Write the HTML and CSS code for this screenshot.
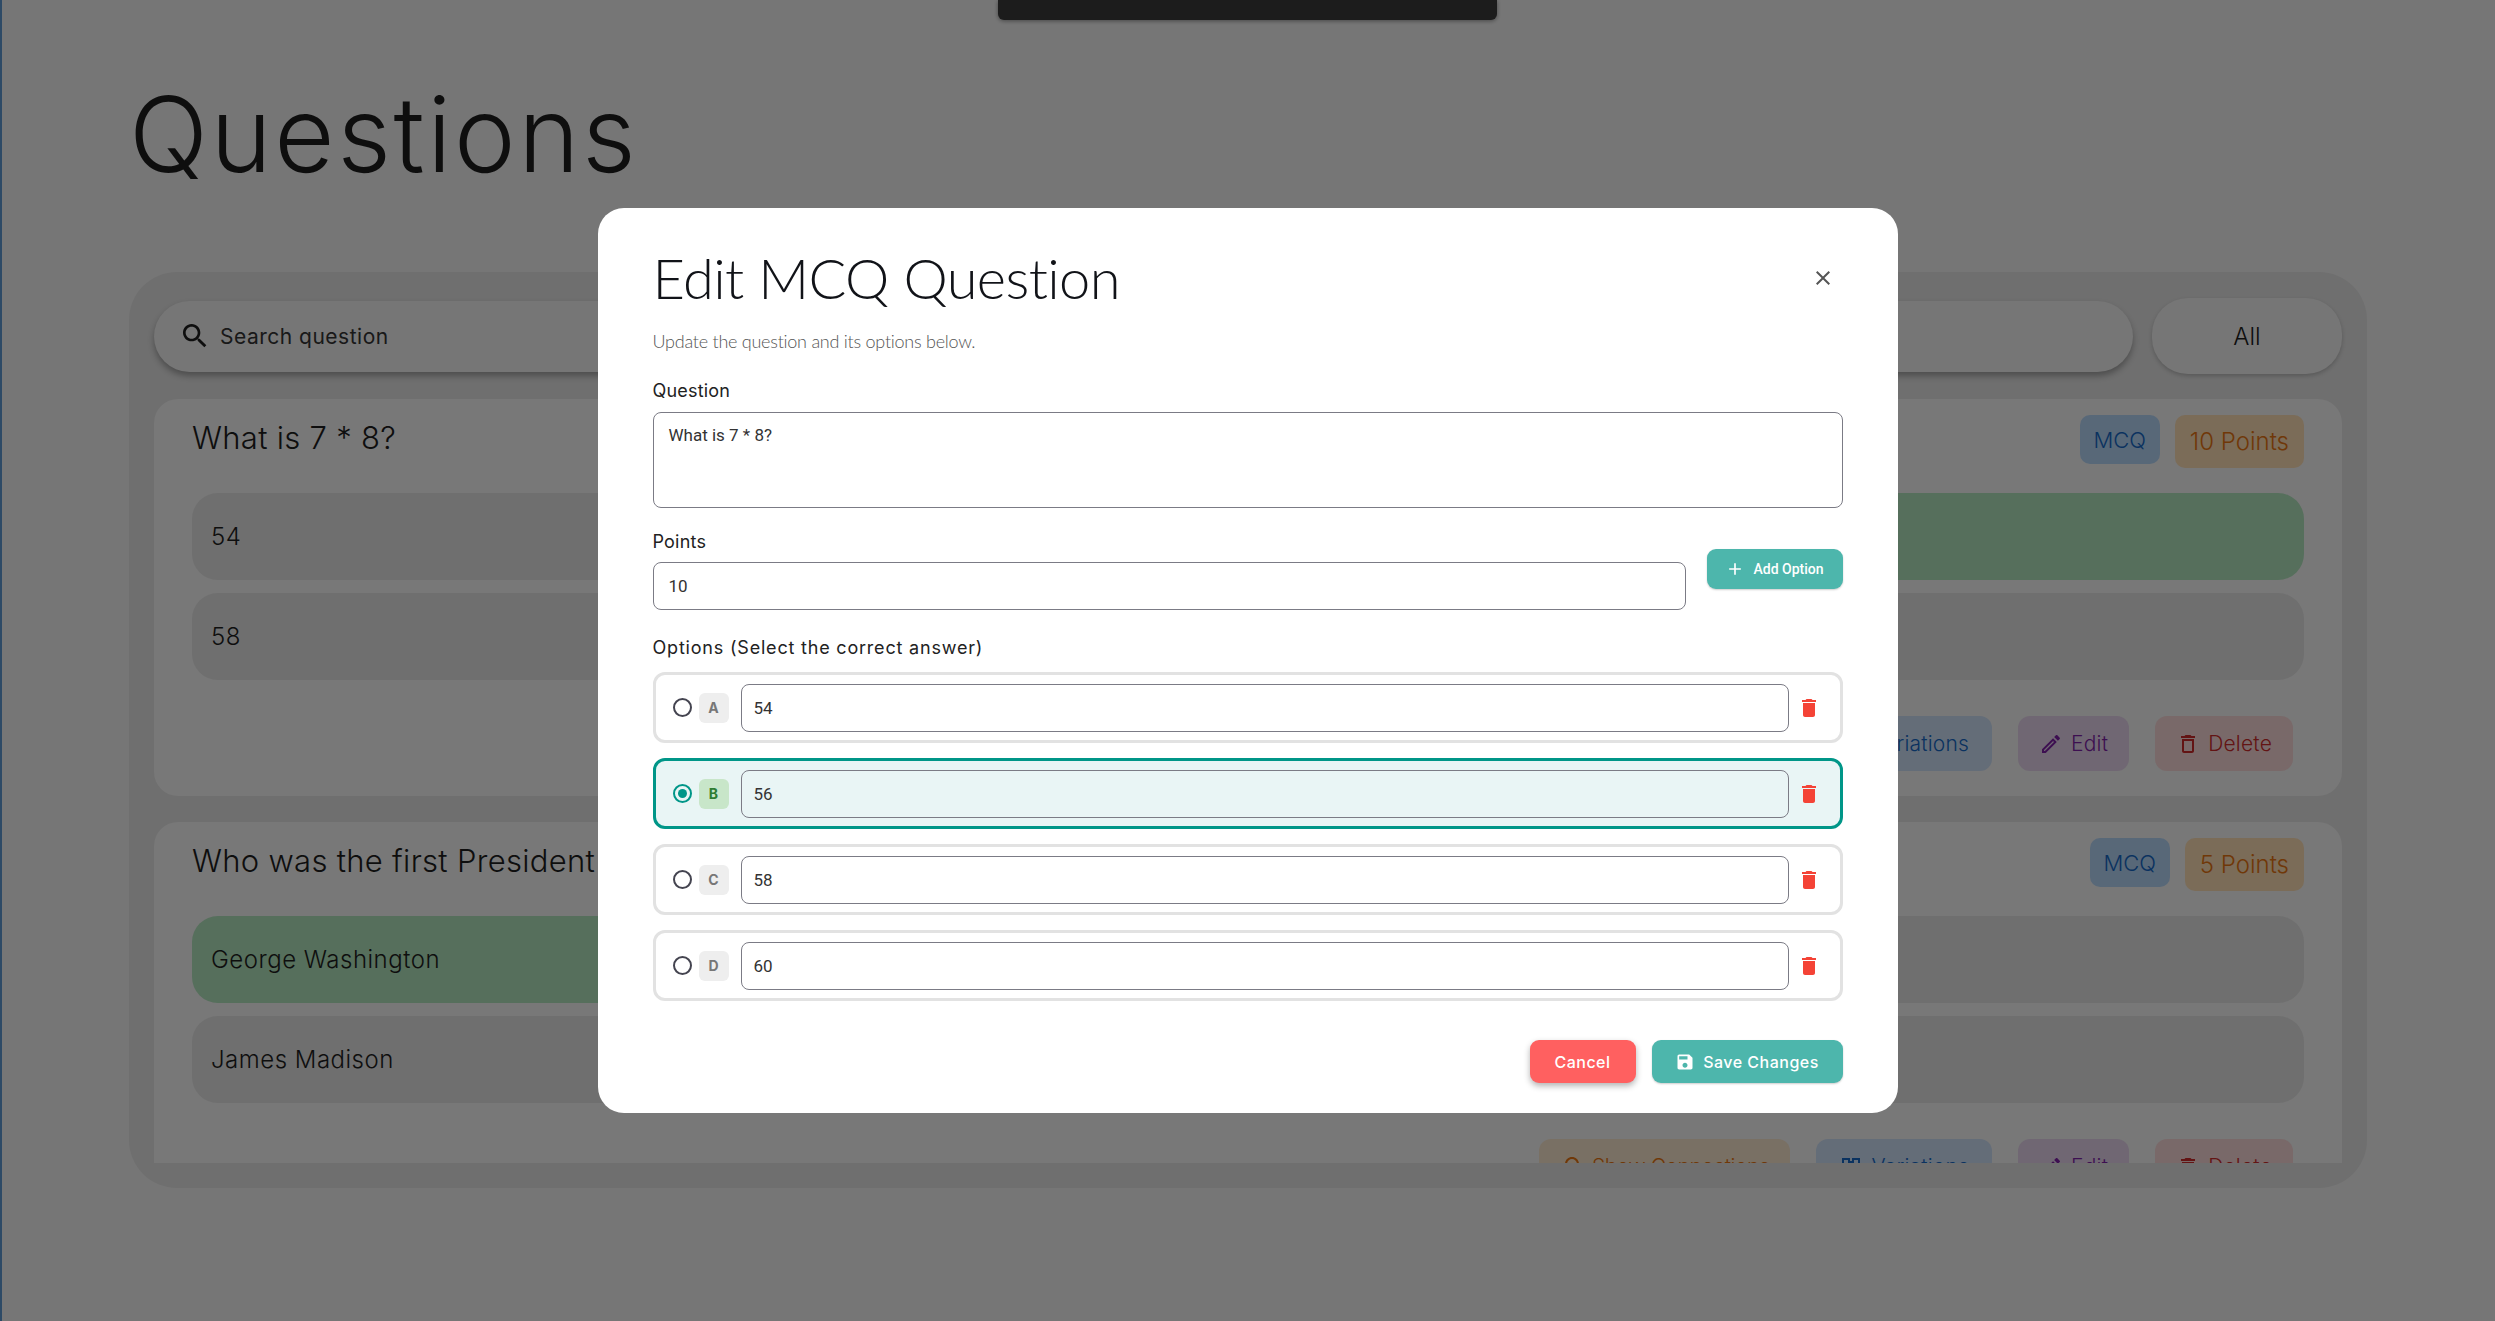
FILE: index.html
```html
<!doctype html>
<html>
    <head>
        <link rel="stylesheet" href="styles.css">
    </head>
    <body>
        <div class="page">
            <h1 class="page-title">Questions</h1>

            <div class="panel">
                <div class="toolbar">
                    <div class="search">
                        <svg class="icon search-icon" viewBox="0 0 24 24"><path d="M15.5 14h-.79l-.28-.27C15.41 12.59 16 11.11 16 9.5 16 5.91 13.09 3 9.5 3S3 5.91 3 9.5 5.91 16 9.5 16c1.61 0 3.09-.59 4.23-1.57l.27.28v.79l5 4.99L20.49 19l-4.99-5zm-6 0C7.01 14 5 11.99 5 9.5S7.01 5 9.5 5 14 7.01 14 9.5 11.99 14 9.5 14z"/></svg>
                        <span>Search question</span>
                    </div>
                    <div class="filter">All</div>
                </div>

                <div class="list">
                    <div class="card card-first">
                        <div class="card-head">
                            <h2 class="card-title">What is 7 * 8?</h2>
                            <div class="tags">
                                <span class="tag tag-type">MCQ</span>
                                <span class="tag tag-points">10 Points</span>
                            </div>
                        </div>
                        <div class="answers">
                            <div class="answer">54</div>
                            <div class="answer answer-right">56</div>
                            <div class="answer">58</div>
                            <div class="answer">60</div>
                        </div>
                        <div class="actions">
                            <span class="action action-orange">
                                <svg class="icon" viewBox="0 0 24 24"><path d="M9 21c0 .55.45 1 1 1h4c.55 0 1-.45 1-1v-1H9v1zm3-19C8.14 2 5 5.14 5 9c0 2.38 1.19 4.47 3 5.74V17c0 .55.45 1 1 1h6c.55 0 1-.45 1-1v-2.26c1.81-1.27 3-3.36 3-5.74 0-3.86-3.14-7-7-7zm2 11.7V16h-4v-2.3C8.48 12.63 7 11.53 7 9c0-2.76 2.24-5 5-5s5 2.24 5 5c0 2.49-1.51 3.65-3 4.7z"/></svg>
                                Show Connections
                            </span>
                            <span class="action action-blue">
                                <svg class="icon" viewBox="0 0 24 24"><path fill-rule="evenodd" d="M3 3h8v8H3zM5 5v4h4V5zM13 3h8v8h-8zM15 5v4h4V5zM11 6h2v2h-2zM6 11h2v4h4v-2h6v8h-6v-4H6z"/></svg>
                                Variations
                            </span>
                            <span class="action action-purple">
                                <svg class="icon" viewBox="0 0 24 24"><path d="M14.06 9.02l.92.92L5.92 19H5v-.92l9.06-9.06M17.66 3c-.25 0-.51.1-.7.29l-1.83 1.83 3.75 3.75 1.83-1.83c.39-.39.39-1.02 0-1.41l-2.34-2.34c-.2-.2-.45-.29-.71-.29zm-3.6 3.19L3 17.25V21h3.75L17.81 9.94l-3.75-3.75z"/></svg>
                                Edit
                            </span>
                            <span class="action action-red">
                                <svg class="icon" viewBox="0 0 24 24"><path d="M6 19c0 1.1.9 2 2 2h8c1.1 0 2-.9 2-2V7H6v12zM8 9h8v10H8V9zm7.5-5-1-1h-5l-1 1H5v2h14V4h-3.5z"/></svg>
                                Delete
                            </span>
                        </div>
                    </div>

                    <div class="card">
                        <div class="card-head">
                            <h2 class="card-title">Who was the first President of the USA?</h2>
                            <div class="tags">
                                <span class="tag tag-type">MCQ</span>
                                <span class="tag tag-points">5 Points</span>
                            </div>
                        </div>
                        <div class="answers">
                            <div class="answer answer-right">George Washington</div>
                            <div class="answer">Thomas Jefferson</div>
                            <div class="answer">James Madison</div>
                            <div class="answer">John Adams</div>
                        </div>
                        <div class="actions">
                            <span class="action action-orange">
                                <svg class="icon" viewBox="0 0 24 24"><path d="M9 21c0 .55.45 1 1 1h4c.55 0 1-.45 1-1v-1H9v1zm3-19C8.14 2 5 5.14 5 9c0 2.38 1.19 4.47 3 5.74V17c0 .55.45 1 1 1h6c.55 0 1-.45 1-1v-2.26c1.81-1.27 3-3.36 3-5.74 0-3.86-3.14-7-7-7zm2 11.7V16h-4v-2.3C8.48 12.63 7 11.53 7 9c0-2.76 2.24-5 5-5s5 2.24 5 5c0 2.49-1.51 3.65-3 4.7z"/></svg>
                                Show Connections
                            </span>
                            <span class="action action-blue">
                                <svg class="icon" viewBox="0 0 24 24"><path fill-rule="evenodd" d="M3 3h8v8H3zM5 5v4h4V5zM13 3h8v8h-8zM15 5v4h4V5zM11 6h2v2h-2zM6 11h2v4h4v-2h6v8h-6v-4H6z"/></svg>
                                Variations
                            </span>
                            <span class="action action-purple">
                                <svg class="icon" viewBox="0 0 24 24"><path d="M14.06 9.02l.92.92L5.92 19H5v-.92l9.06-9.06M17.66 3c-.25 0-.51.1-.7.29l-1.83 1.83 3.75 3.75 1.83-1.83c.39-.39.39-1.02 0-1.41l-2.34-2.34c-.2-.2-.45-.29-.71-.29zm-3.6 3.19L3 17.25V21h3.75L17.81 9.94l-3.75-3.75z"/></svg>
                                Edit
                            </span>
                            <span class="action action-red">
                                <svg class="icon" viewBox="0 0 24 24"><path d="M6 19c0 1.1.9 2 2 2h8c1.1 0 2-.9 2-2V7H6v12zM8 9h8v10H8V9zm7.5-5-1-1h-5l-1 1H5v2h14V4h-3.5z"/></svg>
                                Delete
                            </span>
                        </div>
                    </div>
                </div>
            </div>
        </div>

        <div class="overlay">
            <div class="top-bar"></div>
            <div class="modal">
                <div class="modal-head">
                    <h2 class="modal-title">Edit MCQ Question</h2>
                    <svg class="icon close-icon" viewBox="0 0 24 24"><path d="M19 6.41 17.59 5 12 10.59 6.41 5 5 6.41 10.59 12 5 17.59 6.41 19 12 13.41 17.59 19 19 17.59 13.41 12z"/></svg>
                </div>
                <p class="modal-sub">Update the question and its options below.</p>

                <div class="field-label">Question</div>
                <div class="input textarea">What is 7 * 8?</div>

                <div class="points-row">
                    <div class="points-field">
                        <div class="field-label">Points</div>
                        <div class="input">10</div>
                    </div>
                    <div class="btn btn-teal btn-add">
                        <svg class="icon" viewBox="0 0 24 24"><path d="M19 13h-6v6h-2v-6H5v-2h6V5h2v6h6v2z"/></svg>
                        Add Option
                    </div>
                </div>

                <div class="field-label options-label">Options (Select the correct answer)</div>
                <div class="options">
                    <div class="option">
                        <span class="radio"></span>
                        <span class="letter">A</span>
                        <div class="input">54</div>
                        <svg class="icon trash" viewBox="0 0 24 24"><path d="M6 19c0 1.1.9 2 2 2h8c1.1 0 2-.9 2-2V7H6v12zM19 4h-3.5l-1-1h-5l-1 1H5v2h14V4z"/></svg>
                    </div>
                    <div class="option option-selected">
                        <span class="radio"></span>
                        <span class="letter">B</span>
                        <div class="input">56</div>
                        <svg class="icon trash" viewBox="0 0 24 24"><path d="M6 19c0 1.1.9 2 2 2h8c1.1 0 2-.9 2-2V7H6v12zM19 4h-3.5l-1-1h-5l-1 1H5v2h14V4z"/></svg>
                    </div>
                    <div class="option">
                        <span class="radio"></span>
                        <span class="letter">C</span>
                        <div class="input">58</div>
                        <svg class="icon trash" viewBox="0 0 24 24"><path d="M6 19c0 1.1.9 2 2 2h8c1.1 0 2-.9 2-2V7H6v12zM19 4h-3.5l-1-1h-5l-1 1H5v2h14V4z"/></svg>
                    </div>
                    <div class="option">
                        <span class="radio"></span>
                        <span class="letter">D</span>
                        <div class="input">60</div>
                        <svg class="icon trash" viewBox="0 0 24 24"><path d="M6 19c0 1.1.9 2 2 2h8c1.1 0 2-.9 2-2V7H6v12zM19 4h-3.5l-1-1h-5l-1 1H5v2h14V4z"/></svg>
                    </div>
                </div>

                <div class="modal-foot">
                    <div class="btn btn-red">Cancel</div>
                    <div class="btn btn-teal btn-save">
                        <svg class="icon" viewBox="0 0 24 24"><path d="M17 3H5c-1.11 0-2 .9-2 2v14c0 1.1.89 2 2 2h14c1.1 0 2-.9 2-2V7l-4-4zm-5 16c-1.66 0-3-1.34-3-3s1.34-3 3-3 3 1.34 3 3-1.34 3-3 3zm3-10H5V5h10v4z"/></svg>
                        Save Changes
                    </div>
                </div>
            </div>
        </div>
    </body>
</html>
```

FILE: styles.css
```css
html,
body {
    margin: 0;
    padding: 0;
    height: 100%;
    overflow: hidden;
}
body {
    background: #ececec;
    font-family: "Inter", "Liberation Sans", sans-serif;
    color: #1c1c1c;
}
.icon {
    display: block;
    flex: none;
    fill: currentColor;
}

/* page under the dialog */
.page {
    box-sizing: border-box;
    height: 1321px;
    padding: 0 128px 0 127px;
    border-left: 2px solid #5a94cc;
}
.page-title {
    margin: 0;
    padding-top: 74px;
    height: 272px;
    box-sizing: border-box;
    font-size: 104px;
    line-height: 120px;
    font-weight: 300;
    letter-spacing: 2.6px;
    color: #1c1c1c;
}
.panel {
    height: 916px;
    box-sizing: border-box;
    padding: 26px 25px 25px;
    background: #dedede;
    border-radius: 48px;
    display: flex;
    flex-direction: column;
}
.toolbar {
    display: flex;
    align-items: center;
    gap: 19px;
    height: 76px;
    flex: none;
}
.search {
    flex: 1;
    height: 71px;
    border-radius: 36px;
    background: #ececec;
    box-shadow: 0 4px 6px rgba(0, 0, 0, 0.3);
    display: flex;
    align-items: center;
    padding-left: 25px;
    gap: 9px;
    font-size: 21px;
    letter-spacing: 0.5px;
    font-weight: 400;
    color: #333;
}
.search-icon {
    width: 32px;
    height: 32px;
    color: #1c1c1c;
}
.filter {
    width: 190px;
    height: 76px;
    border-radius: 36px;
    background: #ececec;
    box-shadow: 0 2px 4px rgba(0, 0, 0, 0.2);
    display: flex;
    align-items: center;
    justify-content: center;
    font-size: 24px;
    font-weight: 300;
}
.list {
    flex: 1;
    overflow: hidden;
    margin-top: 25px;
    display: flex;
    flex-direction: column;
    gap: 26px;
}
.card {
    flex: none;
    box-sizing: border-box;
    background: #f0f0f0;
    border-radius: 24px;
    padding: 16px 38px 25px;
}
.card-first {
    height: 397px;
}
.card-head {
    display: flex;
    justify-content: space-between;
    align-items: flex-start;
    height: 78px;
}
.card-title {
    margin: 0;
    padding-top: 3px;
    font-size: 31px;
    line-height: 40px;
    font-weight: 300;
    letter-spacing: 0.3px;
    color: #1c1c1c;
}
.tags {
    display: flex;
    align-items: flex-start;
    gap: 15px;
}
.tag {
    display: flex;
    align-items: center;
    justify-content: center;
    border-radius: 10px;
    font-size: 24px;
    font-weight: 300;
}
.tag-type {
    width: 80px;
    height: 49px;
    background: #b0d0f0;
    color: #1565c0;
    font-size: 22px;
}
.tag-points {
    padding: 0 15px;
    height: 53px;
    background: #f6d8b0;
    color: #e07010;
}
.answers {
    display: grid;
    grid-template-columns: 1fr 1fr;
    gap: 13px 16px;
}
.answer {
    height: 87px;
    box-sizing: border-box;
    padding-left: 19px;
    display: flex;
    align-items: center;
    background: #dedede;
    border-radius: 26px;
    font-size: 24px;
    font-weight: 300;
    letter-spacing: 0.5px;
    color: #1c1c1c;
}
.answer-right {
    background: #acdeb8;
}
.actions {
    display: flex;
    justify-content: flex-end;
    gap: 26px;
    margin-top: 36px;
    padding-right: 11px;
}
.action {
    display: flex;
    align-items: center;
    gap: 8px;
    height: 55px;
    padding: 0 21px;
    border-radius: 12px;
    font-size: 21px;
    font-weight: 300;
    letter-spacing: 0.2px;
}
.action .icon {
    width: 24px;
    height: 24px;
}
.action-orange {
    background: #f2e0c8;
    color: #e07010;
    letter-spacing: -0.4px;
}
.action-blue {
    background: #c8daf0;
    color: #1565c0;
    padding: 0 23px;
}
.action-purple {
    background: #e0cfe6;
    color: #7b1fa2;
}
.action-red {
    background: #f2d2d2;
    color: #c62828;
}

/* dialog */
.overlay {
    position: fixed;
    left: 0;
    top: 0;
    right: 0;
    bottom: 0;
    background: rgba(0, 0, 0, 0.5);
    display: flex;
    justify-content: center;
    padding-top: 208px;
    box-sizing: border-box;
}
.top-bar {
    position: absolute;
    left: 998px;
    top: 0;
    width: 499px;
    height: 20px;
    background: #1c1c1c;
    border-radius: 0 0 6px 6px;
    box-shadow: 0 1px 4px rgba(0, 0, 0, 0.4);
}
.modal {
    box-sizing: border-box;
    width: 1300px;
    height: 905px;
    background: #fff;
    border-radius: 26px;
    padding: 38px 55px 0;
}
.modal-head {
    display: flex;
    justify-content: space-between;
    align-items: center;
    height: 64px;
}
.modal-title {
    margin: 0;
    font-family: "Lato", sans-serif;
    font-size: 56px;
    font-weight: 300;
    line-height: 64px;
    letter-spacing: -0.6px;
    color: #111318;
}
.close-icon {
    width: 24px;
    height: 24px;
    color: #555;
    margin-right: 8px;
}
.modal-sub {
    margin: 19px 0 0;
    height: 24px;
    font-family: "Lato", sans-serif;
    font-size: 18px;
    line-height: 24px;
    font-weight: 300;
    letter-spacing: -0.25px;
    color: #555;
}
.field-label {
    font-size: 18px;
    line-height: 24px;
    font-weight: 400;
    letter-spacing: 0.2px;
    color: #222;
    margin-top: 26px;
    margin-bottom: 9px;
}
.input {
    flex: 1;
    box-sizing: border-box;
    height: 48px;
    padding: 0 15px;
    border: 1px solid #7b7b85;
    border-radius: 8px;
    display: flex;
    align-items: center;
    font-family: "Roboto", sans-serif;
    font-size: 17px;
    color: #333;
}
.textarea {
    height: 96px;
    align-items: flex-start;
    padding-top: 12px;
}
.points-row {
    display: flex;
    gap: 21px;
}
.points-field {
    flex: 1;
}
.points-field .field-label {
    margin-top: 22px;
    margin-bottom: 8px;
}
.btn {
    display: flex;
    align-items: center;
    justify-content: center;
    gap: 8px;
    box-sizing: border-box;
    height: 43px;
    border-radius: 9px;
    color: #fff;
    font-size: 16px;
    letter-spacing: 0.5px;
    font-weight: 500;
}
.btn .icon {
    width: 20px;
    height: 20px;
}
.btn-teal {
    background: #4db6ac;
    box-shadow: 0 1px 2px rgba(0, 0, 0, 0.2);
}
.btn-red {
    background: #ff6060;
    box-shadow: 0 3px 6px rgba(0, 0, 0, 0.3);
    width: 106px;
}
.btn-add {
    width: 136px;
    height: 40px;
    margin-top: 41px;
    font-size: 14px;
    letter-spacing: 0;
    font-family: "Roboto", sans-serif;
}
.btn-save {
    width: 191px;
}
.options-label {
    margin-top: 26px;
    margin-bottom: 12px;
    letter-spacing: 0.8px;
}
.options {
    display: flex;
    flex-direction: column;
    gap: 15px;
}
.option {
    box-sizing: border-box;
    height: 71px;
    border: 3px solid #e2e2e2;
    border-radius: 12px;
    padding: 0 19px 0 17px;
    display: flex;
    align-items: center;
}
.radio {
    box-sizing: border-box;
    width: 19px;
    height: 19px;
    border: 2px solid #444450;
    border-radius: 50%;
    flex: none;
}
.letter {
    margin-left: 7px;
    width: 30px;
    height: 30px;
    border-radius: 6px;
    background: #eeeeee;
    color: #777;
    font-size: 14px;
    font-weight: 700;
    display: flex;
    align-items: center;
    justify-content: center;
    flex: none;
}
.option .input {
    margin-left: 12px;
    padding: 0 12px;
}
.trash {
    width: 24px;
    height: 24px;
    margin-left: 8px;
    color: #f44336;
}
.option-selected {
    border-color: #009688;
    background: #e9f5f5;
}
.option-selected .radio {
    border-color: #009688;
    padding: 3px;
    background: #009688 content-box;
}
.option-selected .letter {
    background: #c8e6c9;
    color: #2e7d32;
}
.modal-foot {
    display: flex;
    justify-content: flex-end;
    gap: 16px;
    margin-top: 39px;
}
```
